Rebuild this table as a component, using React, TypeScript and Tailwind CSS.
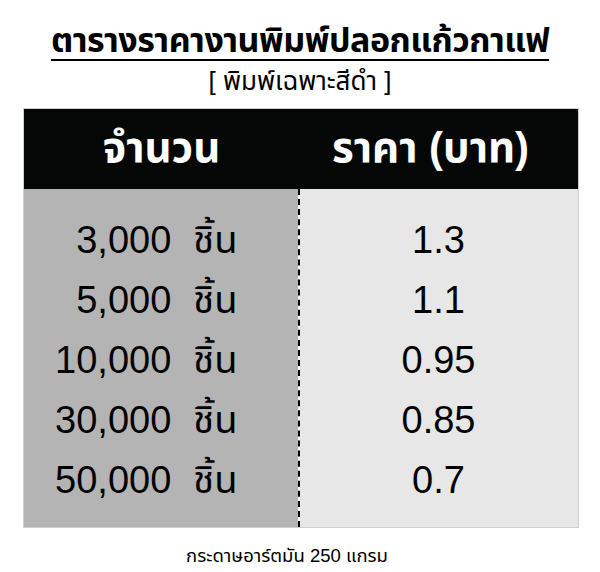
import React from "react";

const rows = [
  ["3,000", "1.3"],
  ["5,000", "1.1"],
  ["10,000", "0.95"],
  ["30,000", "0.85"],
  ["50,000", "0.7"],
];

const font = { fontFamily: '"Liberation Sans", "Noto Sans Thai", "Noto Sans", "DejaVu Sans", sans-serif' };

export default function App() {
  return (
    <div className="w-[600px] h-[572px] bg-white text-black flex flex-col items-center" style={font}>
      <h1 className="mt-[18px] text-[34px] leading-[44px] font-bold underline decoration-2 underline-offset-[7px] tracking-[-0.5px]">
        ตารางราคางานพิมพ์ปลอกแก้วกาแฟ
      </h1>
      <div className="mt-[2px] text-[26px] leading-[34px]">[ พิมพ์เฉพาะสีดำ ]</div>
      <div className="mt-[10px] w-[556px] ml-[1px] border border-[#d0d0d0] flex flex-col">
        <div className="h-[80px] bg-[#050707] text-white flex items-center pb-[4px]">
          <div className="w-[274px] text-center text-[42px] font-bold pl-[2px]">จำนวน</div>
          <div className="flex-1 text-center text-[42px] font-bold pr-[14px]">ราคา (บาท)</div>
        </div>
        <div className="flex h-[338px]">
          <div className="w-[274px] bg-[#b3b4b3] flex flex-col items-end pr-[60px] pt-[21px]">
            {rows.map(([q]) => (
              <div key={q} className="h-[60px] flex items-center gap-[22px] text-[38px]">
                <span>{q}</span>
                <span>ชิ้น</span>
              </div>
            ))}
          </div>
          <div className="w-0 border-l-[2px] border-dashed border-black" />
          <div className="flex-1 bg-[#e6e7e6] flex flex-col items-center pt-[21px]">
            {rows.map(([q, p]) => (
              <div key={q} className="h-[60px] flex items-center text-[38px]">
                {p}
              </div>
            ))}
          </div>
        </div>
      </div>
      <div className="mt-[16px] mr-[26px] text-[18.5px] leading-[24px]">กระดาษอาร์ตมัน 250 แกรม</div>
    </div>
  );
}
